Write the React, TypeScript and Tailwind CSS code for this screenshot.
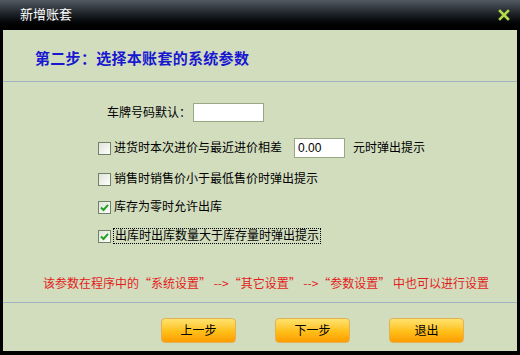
import React from "react";

const cjk = { fontFamily: '"Liberation Sans", "Noto Sans CJK SC", sans-serif' };

function Check({ checked }: { checked?: boolean }) {
  return (
    <span className="w-[13px] h-[13px] shrink-0 border border-[#6e8366] bg-gradient-to-br from-[#dfe3d8] to-white flex items-center justify-center">
      {checked && (
        <svg width="9" height="9" viewBox="0 0 9 9">
          <path d="M1 4.5 L3.5 7 L8 1.8" fill="none" stroke="#21a121" strokeWidth="2" />
        </svg>
      )}
    </span>
  );
}

function OrangeButton({ label }: { label: string }) {
  return (
    <button className="w-[75px] h-[25px] rounded-[4px] border border-[#e2b055] bg-gradient-to-b from-[#ffe36a] via-[#ffc21a] to-[#ff9c00] text-[12px] text-black flex items-center justify-center">
      {label}
    </button>
  );
}

export default function App() {
  return (
    <div className="w-[520px] h-[355px] bg-black flex flex-col select-none" style={cjk}>
      {/* title bar */}
      <div className="h-[30px] shrink-0 flex items-center justify-between pl-[20px] pr-[10px] bg-gradient-to-b from-[#525a62] via-[#1b1f24] to-black">
        <span className="text-[13px] text-white">新增账套</span>
        <svg width="12" height="12" viewBox="0 0 12 12">
          <path d="M2 2 L10 10 M10 2 L2 10" stroke="#b3d94b" strokeWidth="2.6" strokeLinecap="square" />
        </svg>
      </div>

      <div className="flex-1 mx-[3px] mb-[4px] bg-[#d2ddbe] flex flex-col">
        {/* step heading */}
        <div className="h-[52px] shrink-0 flex items-center pl-[32px] pt-[8px] border-b border-[#9fb3c3]">
          <h1 className="text-[15px] font-bold text-[#1818d0] tracking-[0.3px]">第二步：选择本账套的系统参数</h1>
        </div>

        {/* options */}
        <div className="flex-1 flex flex-col text-[12px] text-black">
          <div className="flex items-center ml-[104px] mt-[21px] h-[19px] gap-[2px]">
            <span>车牌号码默认：</span>
            <input className="w-[71px] h-[19px] bg-white border border-[#98a882] outline-none" />
          </div>

          <div className="flex items-center ml-[95px] mt-[16px] h-[20px]">
            <Check />
            <span className="ml-[3px]">进货时本次进价与最近进价相差</span>
            <input
              defaultValue="0.00"
              className="ml-[12px] w-[51px] h-[20px] bg-white border border-[#98a882] outline-none px-[3px] text-[12px]"
            />
            <span className="ml-[8px]">元时弹出提示</span>
          </div>

          <div className="flex items-center ml-[95px] mt-[14px] h-[14px]">
            <Check />
            <span className="ml-[3px]">销售时销售价小于最低售价时弹出提示</span>
          </div>

          <div className="flex items-center ml-[95px] mt-[14px] h-[14px]">
            <Check checked />
            <span className="ml-[3px]">库存为零时允许出库</span>
          </div>

          <div className="flex items-center ml-[95px] mt-[15px] h-[14px]">
            <Check checked />
            <span className="ml-[2px] leading-[14px] border border-dotted border-black px-[1px]">出库时出库数量大于库存量时弹出提示</span>
          </div>

          <p className="mt-auto mb-[12px] ml-[40px] text-[12px] leading-[14px] text-[#e31c1c] font-['Noto_Sans_CJK_SC',sans-serif]">
            该参数在程序中的“系统设置” --&gt;“其它设置” --&gt;“参数设置” 中也可以进行设置
          </p>
        </div>

        {/* footer buttons */}
        <div className="h-[49px] shrink-0 border-t border-[#9fb3c3] flex items-start pt-[15px] pl-[158px] gap-[39px]">
          <OrangeButton label="上一步" />
          <OrangeButton label="下一步" />
          <OrangeButton label="退出" />
        </div>
      </div>
    </div>
  );
}
